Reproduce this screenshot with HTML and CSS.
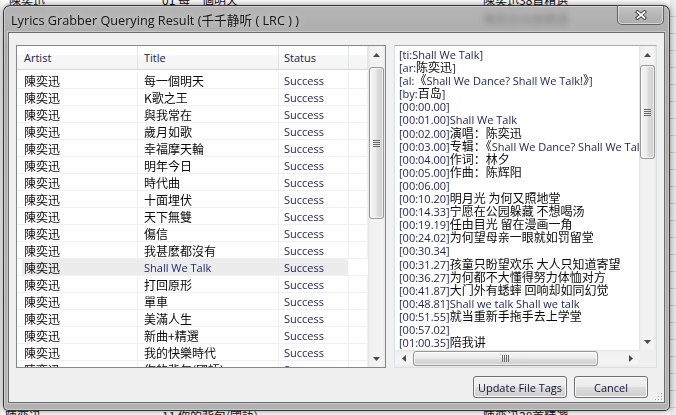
FILE: index.html
```html
<!DOCTYPE html>
<html lang="zh">
<head>
<meta charset="utf-8">
<title>Lyrics Grabber Querying Result</title>
<link rel="stylesheet" href="styles.css">
</head>
<body>
<div class="desktop">
  <div class="bg-top">
    <div class="bgrow"><span class="b1">陳奕迅</span><span class="b2">01 每一個明天</span><span class="b3">陳奕迅38首精選</span></div>
    <div class="bgrow"><span class="b1"></span><span class="b2"></span><span class="b3">陳奕迅38首精選</span></div>
  </div>
  <div class="bg-bottom">
    <div class="bgrow"><span class="b1 lo">陳奕迅</span><span class="b2">11 你的背包(國語)</span><span class="b3">陳奕迅38首精選</span></div>
  </div>
</div>

<div class="window">
  <div class="titlebar">
    <div class="title">Lyrics Grabber Querying Result (<span class="tcj">千千静听</span> ( LRC ) )</div>
    <div class="close">
      <svg width="12" height="10" viewBox="0 0 12 10">
        <path d="M2.5 2 L9.5 8 M9.5 2 L2.5 8" stroke="#3a3a3a" stroke-width="3.6" stroke-linecap="square" fill="none"/>
        <path d="M2.5 2 L9.5 8 M9.5 2 L2.5 8" stroke="#ffffff" stroke-width="1.8" stroke-linecap="square" fill="none"/>
      </svg>
    </div>
  </div>

  <div class="client">
    <div class="panes">
      <div class="list">
        <div class="lv">
          <div class="hdr">
            <div class="h col1 first">Artist</div>
            <div class="h col2">Title</div>
            <div class="h col3 last">Status</div>
            <div class="h col4"></div>
          </div>
          <div class="rows">
            <div class="row"><div class="c col1 cj first">陳奕迅</div><div class="c col2 cj">每一個明天</div><div class="c col3">Success</div><div class="c col4"></div></div>
            <div class="row"><div class="c col1 cj first">陳奕迅</div><div class="c col2 cj">K歌之王</div><div class="c col3">Success</div><div class="c col4"></div></div>
            <div class="row"><div class="c col1 cj first">陳奕迅</div><div class="c col2 cj">與我常在</div><div class="c col3">Success</div><div class="c col4"></div></div>
            <div class="row"><div class="c col1 cj first">陳奕迅</div><div class="c col2 cj">歲月如歌</div><div class="c col3">Success</div><div class="c col4"></div></div>
            <div class="row"><div class="c col1 cj first">陳奕迅</div><div class="c col2 cj">幸福摩天輪</div><div class="c col3">Success</div><div class="c col4"></div></div>
            <div class="row"><div class="c col1 cj first">陳奕迅</div><div class="c col2 cj">明年今日</div><div class="c col3">Success</div><div class="c col4"></div></div>
            <div class="row"><div class="c col1 cj first">陳奕迅</div><div class="c col2 cj">時代曲</div><div class="c col3">Success</div><div class="c col4"></div></div>
            <div class="row"><div class="c col1 cj first">陳奕迅</div><div class="c col2 cj">十面埋伏</div><div class="c col3">Success</div><div class="c col4"></div></div>
            <div class="row"><div class="c col1 cj first">陳奕迅</div><div class="c col2 cj">天下無雙</div><div class="c col3">Success</div><div class="c col4"></div></div>
            <div class="row"><div class="c col1 cj first">陳奕迅</div><div class="c col2 cj">傷信</div><div class="c col3">Success</div><div class="c col4"></div></div>
            <div class="row"><div class="c col1 cj first">陳奕迅</div><div class="c col2 cj">我甚麼都沒有</div><div class="c col3">Success</div><div class="c col4"></div></div>
            <div class="row sel"><div class="c col1 cj first">陳奕迅</div><div class="c col2">Shall We Talk</div><div class="c col3">Success</div><div class="c col4"></div></div>
            <div class="row"><div class="c col1 cj first">陳奕迅</div><div class="c col2 cj">打回原形</div><div class="c col3">Success</div><div class="c col4"></div></div>
            <div class="row"><div class="c col1 cj first">陳奕迅</div><div class="c col2 cj">單車</div><div class="c col3">Success</div><div class="c col4"></div></div>
            <div class="row"><div class="c col1 cj first">陳奕迅</div><div class="c col2 cj">美滿人生</div><div class="c col3">Success</div><div class="c col4"></div></div>
            <div class="row"><div class="c col1 cj first">陳奕迅</div><div class="c col2 cj">新曲+精選</div><div class="c col3">Success</div><div class="c col4"></div></div>
            <div class="row"><div class="c col1 cj first">陳奕迅</div><div class="c col2 cj">我的快樂時代</div><div class="c col3">Success</div><div class="c col4"></div></div>
            <div class="row"><div class="c col1 cj first">陳奕迅</div><div class="c col2 cj">你的背包(國語)</div><div class="c col3">Success</div><div class="c col4"></div></div>
          </div>
        </div>
        <div class="vs">
          <div class="arrow"><svg width="7" height="4" viewBox="0 0 7 4"><path d="M0 4 L3.5 0 L7 4 Z" fill="#4a4a4a"/></svg></div>
          <div class="track list-track">
            <div class="thumb list-thumb">
              <svg width="7" height="7" viewBox="0 0 7 7"><path d="M0 0.5H7M0 2.5H7M0 4.5H7M0 6.5H7" stroke="#6a6a6a" stroke-width="1"/></svg>
            </div>
          </div>
          <div class="arrow"><svg width="7" height="4" viewBox="0 0 7 4"><path d="M0 0 L3.5 4 L7 0 Z" fill="#4a4a4a"/></svg></div>
        </div>
      </div>

      <div class="textbox">
        <div class="lyrics">
          <div class="ln"><span class="l">[ti:Shall We Talk]</span></div>
          <div class="ln"><span class="l">[ar:</span>陈奕迅<span class="l">]</span></div>
          <div class="ln"><span class="l">[al:</span>《<span class="l">Shall We Dance? Shall We Talk!</span>》<span class="l">]</span></div>
          <div class="ln"><span class="l">[by:</span>百岛<span class="l">]</span></div>
          <div class="ln"><span class="l">[00:00.00]</span></div>
          <div class="ln"><span class="l">[00:01.00]Shall We Talk</span></div>
          <div class="ln"><span class="l">[00:02.00]</span>演唱：陈奕迅</div>
          <div class="ln"><span class="l">[00:03.00]</span>专辑：《<span class="l">Shall We Dance? Shall We Talk!</span>》</div>
          <div class="ln"><span class="l">[00:04.00]</span>作词：林夕</div>
          <div class="ln"><span class="l">[00:05.00]</span>作曲：陈辉阳</div>
          <div class="ln"><span class="l">[00:06.00]</span></div>
          <div class="ln"><span class="l">[00:10.20]</span>明月光 为何又照地堂</div>
          <div class="ln"><span class="l">[00:14.33]</span>宁愿在公园躲藏 不想喝汤</div>
          <div class="ln"><span class="l">[00:19.19]</span>任由目光 留在漫画一角</div>
          <div class="ln"><span class="l">[00:24.02]</span>为何望母亲一眼就如罚留堂</div>
          <div class="ln"><span class="l">[00:30.34]</span></div>
          <div class="ln"><span class="l">[00:31.27]</span>孩童只盼望欢乐 大人只知道寄望</div>
          <div class="ln"><span class="l">[00:36.27]</span>为何都不大懂得努力体恤对方</div>
          <div class="ln"><span class="l">[00:41.87]</span>大门外有蟋蟀 回响却如同幻觉</div>
          <div class="ln"><span class="l">[00:48.81]Shall we talk Shall we talk</span></div>
          <div class="ln"><span class="l">[00:51.55]</span>就当重新手拖手去上学堂</div>
          <div class="ln"><span class="l">[00:57.02]</span></div>
          <div class="ln"><span class="l">[01:00.35]</span>陪我讲</div>
        </div>
        <div class="vs">
          <div class="arrow"><svg width="7" height="4" viewBox="0 0 7 4"><path d="M0 4 L3.5 0 L7 4 Z" fill="#4a4a4a"/></svg></div>
          <div class="track lyr-track">
            <div class="thumb lyr-thumb">
              <svg width="7" height="7" viewBox="0 0 7 7"><path d="M0 0.5H7M0 2.5H7M0 4.5H7M0 6.5H7" stroke="#6a6a6a" stroke-width="1"/></svg>
            </div>
          </div>
          <div class="arrow"><svg width="7" height="4" viewBox="0 0 7 4"><path d="M0 0 L3.5 4 L7 0 Z" fill="#4a4a4a"/></svg></div>
        </div>
        <div class="hs">
          <div class="harrow"><svg width="4" height="7" viewBox="0 0 4 7"><path d="M4 0 L0 3.5 L4 7 Z" fill="#4a4a4a"/></svg></div>
          <div class="htrack">
            <div class="hthumb">
              <svg width="7" height="7" viewBox="0 0 7 7"><path d="M0.5 0V7M2.5 0V7M4.5 0V7M6.5 0V7" stroke="#6a6a6a" stroke-width="1"/></svg>
            </div>
          </div>
          <div class="harrow"><svg width="4" height="7" viewBox="0 0 4 7"><path d="M0 0 L4 3.5 L0 7 Z" fill="#4a4a4a"/></svg></div>
        </div>
        <div class="corner"></div>
      </div>
    </div>

    <div class="buttons">
      <button class="btn btn-update">Update File Tags</button>
      <button class="btn btn-cancel">Cancel</button>
    </div>

    <svg class="grip" width="10" height="10" viewBox="0 0 10 10">
      <g fill="#ffffff"><rect x="9" y="3" width="1" height="1"/><rect x="9" y="6" width="1" height="1"/><rect x="6" y="6" width="1" height="1"/><rect x="9" y="9" width="1" height="1"/><rect x="6" y="9" width="1" height="1"/><rect x="3" y="9" width="1" height="1"/></g>
      <g fill="#9c9c9c"><rect x="8" y="2" width="1" height="1"/><rect x="8" y="5" width="1" height="1"/><rect x="5" y="5" width="1" height="1"/><rect x="8" y="8" width="1" height="1"/><rect x="5" y="8" width="1" height="1"/><rect x="2" y="8" width="1" height="1"/></g>
    </svg>
  </div>
</div>
</body>
</html>
```

FILE: styles.css
```css
* { box-sizing: border-box; }

html, body {
  margin: 0;
  padding: 0;
}

body {
  width: 676px;
  height: 415px;
  overflow: hidden;
  position: relative;
  background: #ffffff;
  font-family: "Open Sans", "Noto Sans CJK SC", sans-serif;
}

/* ---------- the application behind the dialog ---------- */
.desktop {
  height: 415px;
  display: flex;
  flex-direction: column;
  justify-content: space-between;
  background:
    repeating-linear-gradient(180deg, #ececec 0, #ececec 16px, #cfcfcf 16px, #cfcfcf 17px) right top / 6px 100% no-repeat,
    linear-gradient(90deg, #ececec 0, #ffffff 3px, #ffffff 669px, #e6e6e6 672px);
}

.bg-top { margin-top: -10px; }
.bg-bottom { margin-bottom: -10px; }

.bgrow {
  display: flex;
  height: 19px;
  line-height: 19px;
  font-family: "Noto Sans CJK TC", sans-serif;
  font-size: 12px;
  color: #111;
  white-space: nowrap;
}

.b1 { width: 162px; padding-left: 9px; }
.b1.lo { padding-left: 5px; }
.b2 { width: 321px; }
.b3 { flex: 1; }

/* ---------- dialog window ---------- */
.window {
  position: absolute;
  left: 3px;
  top: 5px;
  width: 667px;
  height: 406px;
  border: 1px solid rgba(35, 35, 35, 0.85);
  border-radius: 7px 7px 5px 5px;
  background: linear-gradient(180deg, rgba(160, 160, 160, 0.78), rgba(150, 150, 150, 0.8) 40px, rgba(158, 158, 158, 0.8));
  backdrop-filter: blur(3px);
  box-shadow: 0 0 7px rgba(0, 0, 0, 0.45), inset 0 0 0 1px rgba(255, 255, 255, 0.35);
  display: flex;
  flex-direction: column;
}

.titlebar {
  height: 26px;
  display: flex;
  align-items: center;
  padding-left: 7px;
}

.title {
  flex: 1;
  font-size: 12.7px;
  color: #141414;
  white-space: nowrap;
  text-shadow: 0 0 6px rgba(255, 255, 255, 0.55);
  padding-top: 1px;
}

.tcj {
  font-family: "Noto Sans CJK SC", sans-serif;
}

.close {
  align-self: flex-start;
  margin-top: -1px;
  margin-right: 5px;
  width: 47px;
  height: 20px;
  border: 1px solid rgba(60, 60, 60, 0.7);
  border-radius: 0 0 5px 5px;
  background: linear-gradient(180deg, rgba(225, 225, 225, 0.35), rgba(190, 190, 190, 0.25) 50%, rgba(170, 170, 170, 0.3));
  box-shadow: inset 0 0 0 1px rgba(255, 255, 255, 0.45);
  display: flex;
  align-items: center;
  justify-content: center;
}

/* ---------- client area ---------- */
.client {
  position: relative;
  margin: 0 4px;
  height: 371px;
  border: 1px solid #6b6b6b;
  box-shadow: 0 0 0 1px rgba(255, 255, 255, 0.3);
  background: #f0f0f0;
  padding: 12px 7px 0 7px;
  font-size: 11px;
  color: #1b2256;
}

.panes {
  display: flex;
  gap: 8px;
  height: 323px;
}

/* ---------- list view ---------- */
.list {
  width: 370px;
  border: 1px solid #828790;
  background: #ffffff;
  display: flex;
}

.lv {
  flex: 1;
  overflow: hidden;
}

.hdr {
  display: flex;
  height: 24px;
  border-bottom: 1px solid #d5d5d5;
  background: linear-gradient(180deg, #ffffff 0, #ffffff 40%, #f7f8f9 40%, #f3f4f6 100%);
}

.h {
  line-height: 23px;
  padding-left: 6px;
  border-right: 1px solid #e3e5e8;
  color: #1b2256;
  white-space: nowrap;
}

.col1 { width: 121px; flex: none; }
.col2 { width: 141px; flex: none; }
.col3 { width: 70px; flex: none; }
.col4 { width: 19px; flex: none; }

.first { padding-left: 7px; }
.last { padding-left: 5px; }

.rows { padding-top: 2px; }

.row {
  display: flex;
  height: 17px;
  border-bottom: 1px solid #f0f0f0;
}

.c {
  line-height: 18px;
  padding-left: 6px;
  border-right: 1px solid #f0f0f0;
  white-space: nowrap;
  overflow: hidden;
  color: #1b2256;
}

.c.col3 { padding-left: 5px; }
.c.first { padding-left: 7px; }

.cj {
  font-family: "Noto Sans CJK TC", sans-serif;
  font-size: 12px;
  color: #0a0a0a;
}

.row.sel {
  background: linear-gradient(90deg, transparent 5px, #ececec 5px, #ececec 331px, transparent 331px);
}

.row.sel .c { border-right-color: transparent; }
.row.sel .col2 { color: #1f2a6e; }

/* ---------- scrollbars ---------- */
.vs {
  width: 17px;
  flex: none;
  display: flex;
  flex-direction: column;
  background: linear-gradient(90deg, #e3e3e3 0, #f1f1f1 2px, #f4f4f4 14px, #e9e9e9 17px);
}

.arrow {
  height: 17px;
  flex: none;
  display: flex;
  align-items: center;
  justify-content: center;
}

.track {
  flex: 1;
}

.thumb {
  width: 15px;
  margin-left: 1px;
  border: 1px solid #979797;
  border-radius: 3px;
  background: linear-gradient(90deg, #f4f4f4 0, #ececec 45%, #dcdcdc 55%, #d0d0d0 100%);
  box-shadow: inset 0 0 0 1px rgba(255, 255, 255, 0.7);
  display: flex;
  align-items: center;
  justify-content: center;
}

.list-track { padding-top: 4px; }
.list-thumb { height: 152px; }

.lyr-track { padding-top: 2px; }
.lyr-thumb { height: 94px; }

.hs {
  display: flex;
  height: 17px;
  background: linear-gradient(180deg, #e3e3e3 0, #f1f1f1 2px, #f4f4f4 14px, #e9e9e9 17px);
}

.harrow {
  width: 17px;
  flex: none;
  display: flex;
  align-items: center;
  justify-content: center;
}

.htrack {
  flex: 1;
  padding-left: 1px;
}

.hthumb {
  width: 185px;
  height: 15px;
  margin-top: 1px;
  border: 1px solid #979797;
  border-radius: 3px;
  background: linear-gradient(180deg, #f4f4f4 0, #ececec 45%, #dcdcdc 55%, #d0d0d0 100%);
  box-shadow: inset 0 0 0 1px rgba(255, 255, 255, 0.7);
  display: flex;
  align-items: center;
  justify-content: center;
}

/* ---------- lyrics text box ---------- */
.textbox {
  flex: 1;
  border: 1px solid #dbdfe6;
  border-top-color: #abadb3;
  background: #ffffff;
  display: grid;
  grid-template-columns: 1fr 17px;
  grid-template-rows: 1fr 17px;
  overflow: hidden;
}

.lyrics {
  overflow: hidden;
  padding: 1px 0 0 4px;
  font-family: "Noto Sans CJK SC", sans-serif;
  font-size: 12px;
  color: #0a0a0a;
}

.ln {
  height: 13.1px;
  line-height: 13px;
  white-space: nowrap;
}

.l {
  font-family: "Open Sans", sans-serif;
  font-size: 11px;
  color: #1b2256;
}

.corner { background: #f0f0f0; }

/* ---------- buttons ---------- */
.buttons {
  display: flex;
  justify-content: flex-end;
  gap: 7px;
  margin-top: 8px;
  padding-right: 9px;
}

.btn {
  height: 22px;
  border: 1px solid #707070;
  border-radius: 3px;
  background: linear-gradient(180deg, #f2f2f2 0, #ebebeb 50%, #dddddd 50%, #cfcfcf 100%);
  box-shadow: inset 0 0 0 1px #fbfbfb;
  font-family: "Open Sans", sans-serif;
  font-size: 11px;
  color: #101535;
  padding: 0;
}

.btn-update { width: 94px; }
.btn-cancel { width: 74px; }

.grip {
  position: absolute;
  right: 1px;
  bottom: 1px;
}
```
